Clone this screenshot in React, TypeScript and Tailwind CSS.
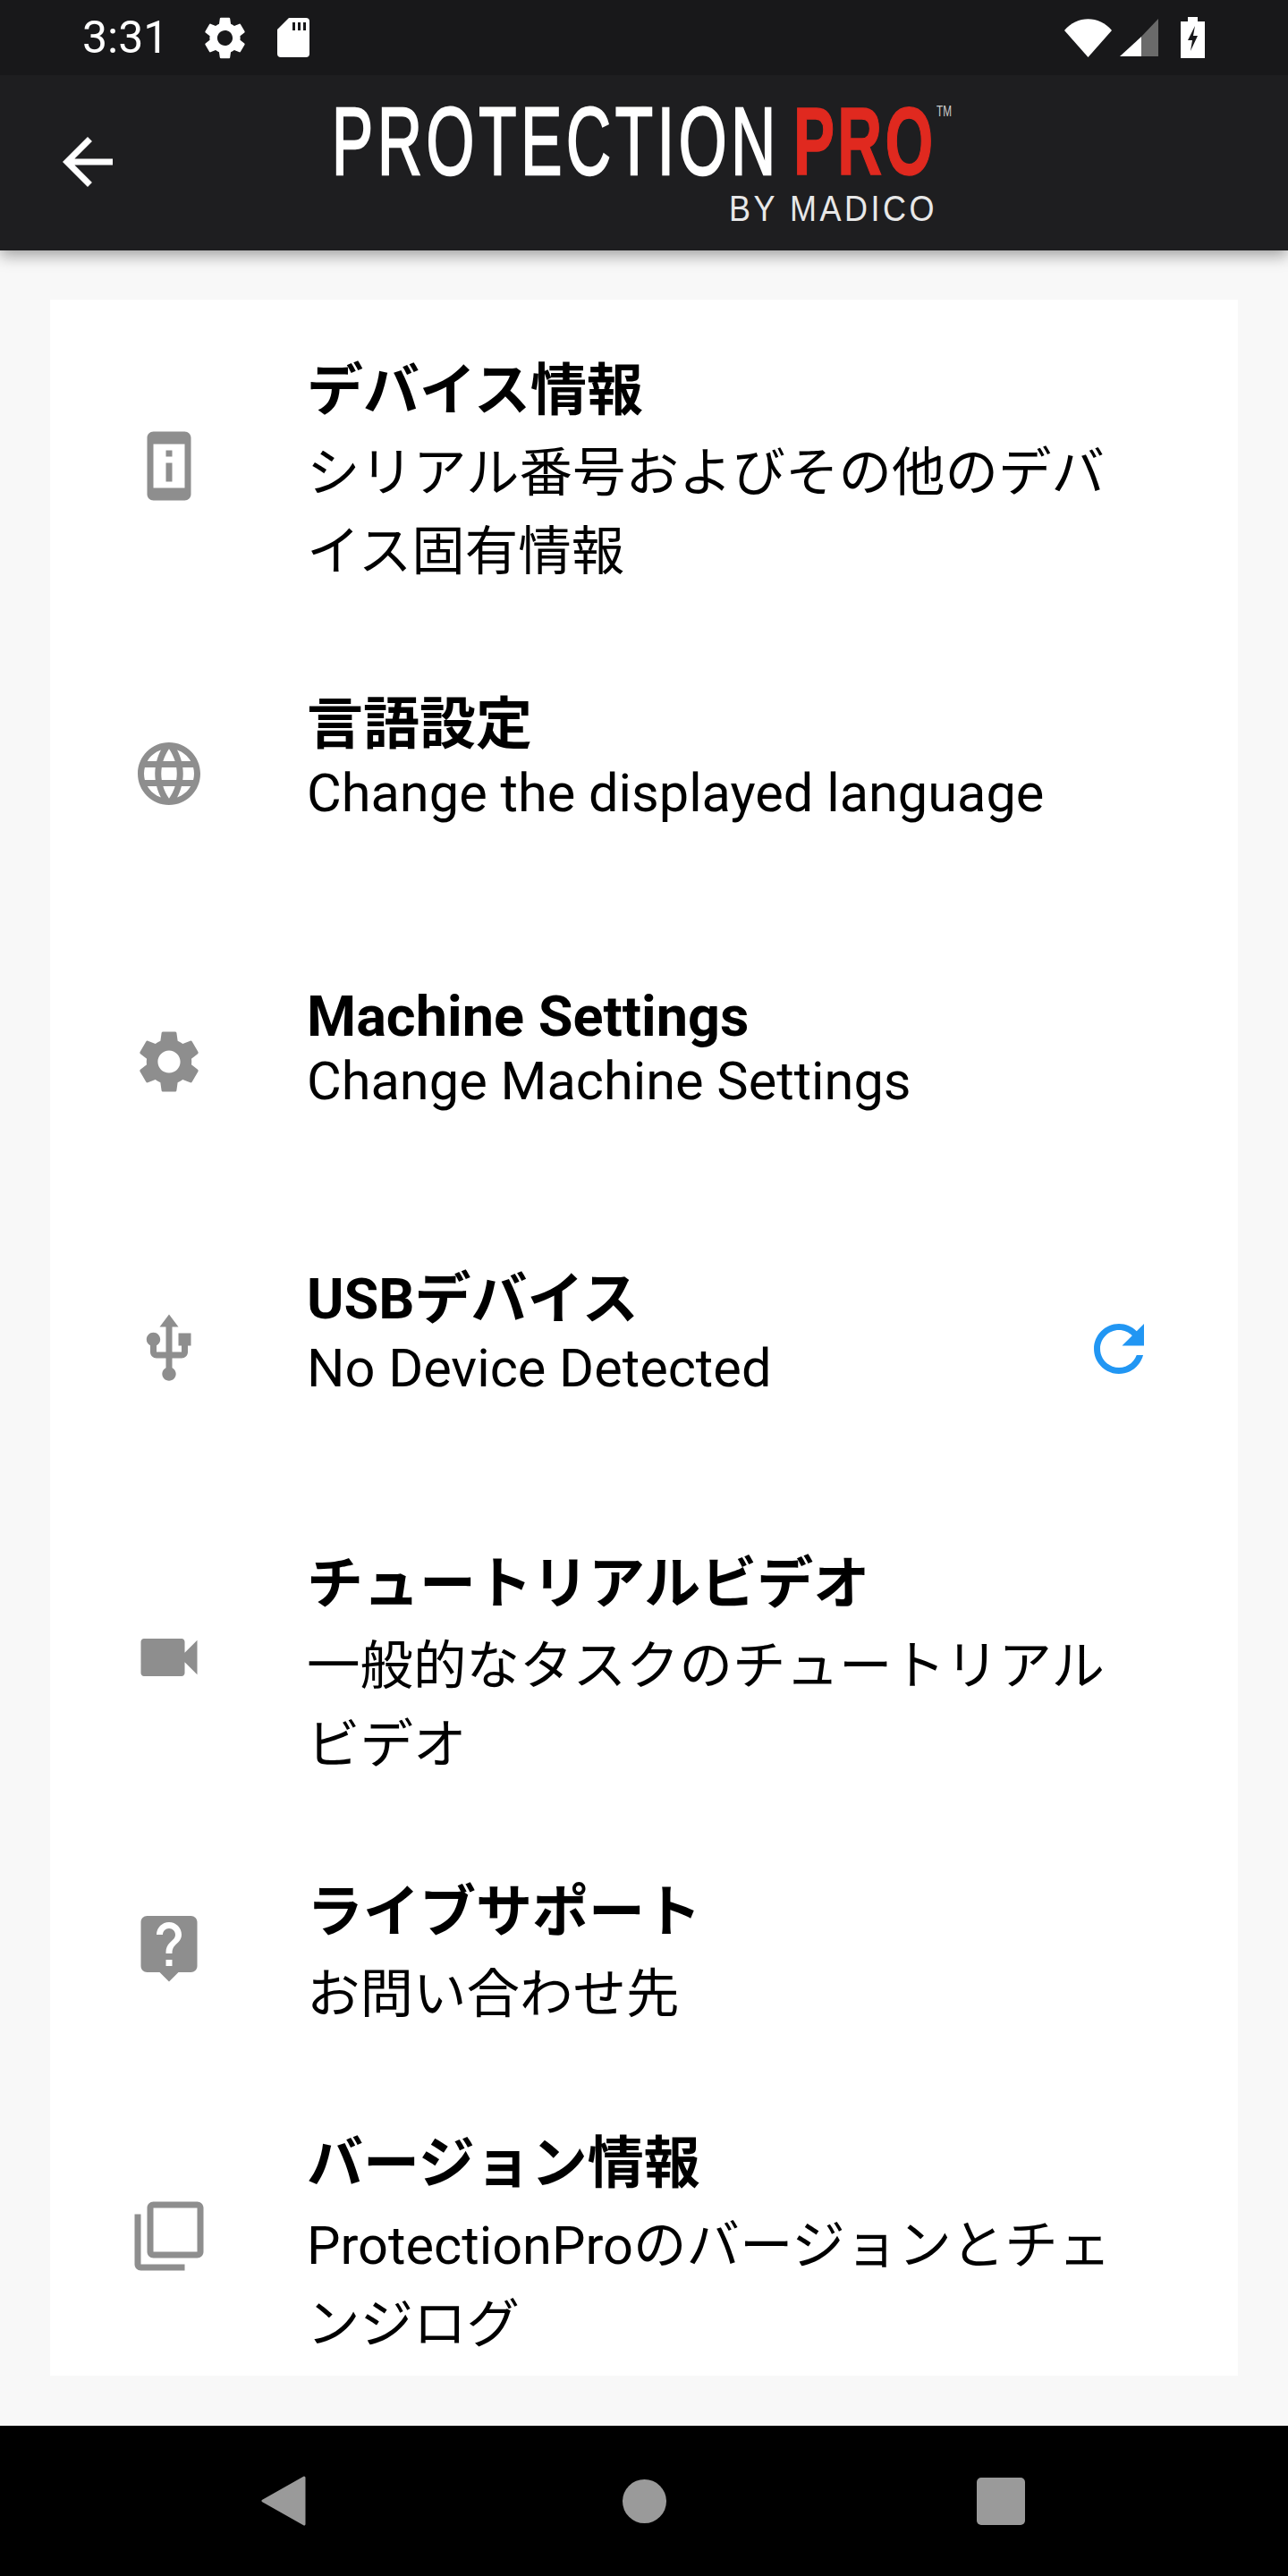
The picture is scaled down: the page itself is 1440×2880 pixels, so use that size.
import type { ReactNode } from "react";

const PATHS = {
  device:
    "M13 7h-2v2h2V7zm0 4h-2v6h2v-6zm4-9.99L7 1c-1.1 0-2 .9-2 2v18c0 1.1.9 2 2 2h10c1.1 0 2-.9 2-2V3c0-1.1-.9-1.99-2-1.99zM17 19H7V5h10v14z",
  globe:
    "M11.99 2C6.47 2 2 6.48 2 12s4.47 10 9.99 10C17.52 22 22 17.52 22 12S17.52 2 11.99 2zm6.93 6h-2.95c-.32-1.25-.78-2.45-1.38-3.56 1.84.63 3.37 1.91 4.33 3.56zM12 4.04c.83 1.2 1.48 2.53 1.91 3.96h-3.82c.43-1.43 1.08-2.76 1.91-3.96zM4.26 14C4.1 13.36 4 12.69 4 12s.1-1.36.26-2h3.38c-.08.66-.14 1.32-.14 2 0 .68.06 1.34.14 2H4.26zm.82 2h2.95c.32 1.25.78 2.45 1.38 3.56-1.84-.63-3.37-1.9-4.33-3.56zm2.95-8H5.08c.96-1.66 2.49-2.93 4.33-3.56C8.81 5.55 8.35 6.75 8.03 8zM12 19.96c-.83-1.2-1.48-2.53-1.91-3.96h3.82c-.43 1.43-1.08 2.76-1.91 3.96zM14.34 14H9.66c-.09-.66-.16-1.32-.16-2 0-.68.07-1.35.16-2h4.68c.09.65.16 1.32.16 2 0 .68-.07 1.34-.16 2zm.25 5.56c.6-1.11 1.06-2.31 1.38-3.56h2.95c-.96 1.65-2.49 2.93-4.33 3.56zM16.36 14c.08-.66.14-1.32.14-2 0-.68-.06-1.34-.14-2h3.38c.16.64.26 1.31.26 2s-.1 1.36-.26 2h-3.38z",
  gear:
    "M19.14 12.94c.04-.3.06-.61.06-.94 0-.32-.02-.64-.07-.94l2.03-1.58c.18-.14.23-.41.12-.61l-1.92-3.32c-.12-.22-.37-.29-.59-.22l-2.39.96c-.5-.38-1.03-.7-1.62-.94l-.36-2.54c-.04-.24-.24-.41-.48-.41h-3.84c-.24 0-.43.17-.47.41l-.36 2.54c-.59.24-1.13.57-1.62.94l-2.39-.96c-.22-.08-.47 0-.59.22L2.74 8.87c-.12.21-.08.47.12.61l2.03 1.58c-.05.3-.09.63-.09.94s.02.64.07.94l-2.03 1.58c-.18.14-.23.41-.12.61l1.92 3.32c.12.22.37.29.59.22l2.39-.96c.5.38 1.03.7 1.62.94l.36 2.54c.05.24.24.41.48.41h3.84c.24 0 .44-.17.47-.41l.36-2.54c.59-.24 1.13-.56 1.62-.94l2.39.96c.22.08.47 0 .59-.22l1.92-3.32c.12-.22.07-.47-.12-.61l-2.01-1.58zM12 15.6c-1.98 0-3.6-1.62-3.6-3.6s1.62-3.6 3.6-3.6 3.6 1.62 3.6 3.6-1.62 3.6-3.6 3.6z",
  usb:
    "M15 7v4h1v2h-3V5h2l-3-4-3 4h2v8H8v-2.07c.7-.37 1.2-1.08 1.2-1.93 0-1.21-.99-2.2-2.2-2.2-1.21 0-2.2.99-2.2 2.2 0 .85.5 1.56 1.2 1.93V13c0 1.11.89 2 2 2h3v3.05c-.71.37-1.2 1.1-1.2 1.95 0 1.22.99 2.2 2.2 2.2 1.21 0 2.2-.98 2.2-2.2 0-.85-.49-1.58-1.2-1.95V15h3c1.11 0 2-.89 2-2v-2h1V7h-4z",
  video:
    "M17 10.5V7c0-.55-.45-1-1-1H4c-.55 0-1 .45-1 1v10c0 .55.45 1 1 1h12c.55 0 1-.45 1-1v-3.5l4 4v-11l-4 4z",
  help:
    "M19 2H5c-1.11 0-2 .9-2 2v14c0 1.1.89 2 2 2h4l3 3 3-3h4c1.1 0 2-.9 2-2V4c0-1.1-.9-2-2-2zm-6 16h-2v-2h2v2zm2.07-7.75l-.9.92C13.45 11.9 13 12.5 13 14h-2v-.5c0-1.1.45-2.1 1.17-2.83l1.24-1.26c.37-.36.59-.86.59-1.41 0-1.1-.9-2-2-2s-2 .9-2 2H8c0-2.21 1.79-4 4-4s4 1.79 4 4c0 .88-.36 1.68-.93 2.25z",
  copies:
    "M3 5H1v16c0 1.1.9 2 2 2h14v-2H3V5zm18-4H7c-1.1 0-2 .9-2 2v14c0 1.1.9 2 2 2h14c1.1 0 2-.9 2-2V3c0-1.1-.9-2-2-2zm0 16H7V3h14v14z",
  refresh:
    "M17.65 6.35C16.2 4.9 14.21 4 12 4c-4.42 0-7.99 3.58-7.99 8s3.57 8 7.99 8c3.73 0 6.84-2.55 7.73-6h-2.08c-.82 2.33-3.04 4-5.65 4-3.31 0-6-2.69-6-6s2.69-6 6-6c1.66 0 3.14.69 4.22 1.78L13 11h7V4l-2.35 2.35z",
  back: "M20 11H7.83l5.59-5.59L12 4l-8 8 8 8 1.41-1.41L7.83 13H20v-2z",
};

const Icon = ({ d, className }: { d: string; className?: string }) => (
  <svg viewBox="0 0 24 24" fill="currentColor" className={className}>
    <path d={d} />
  </svg>
);

interface Row {
  icon: string;
  title: string;
  titleClass: string;
  lines: string;
  linesClass: string;
  rowClass: string;
  iconClass: string;
  action?: ReactNode;
}

const JP_TITLE = "leading-[96px] text-[63px]";
const JP_SUB = "leading-[88px] text-[59.5px]";
const EN_SUB = "mt-[-2px] leading-[62px] text-[59.5px]";

const rows: Row[] = [
  {
    icon: PATHS.device,
    title: "デバイス情報",
    titleClass: JP_TITLE,
    lines: "シリアル番号およびその他のデバイス固有情報",
    linesClass: JP_SUB,
    rowClass: "mt-[52px]",
    iconClass: "mt-[92px]",
  },
  {
    icon: PATHS.globe,
    title: "言語設定",
    titleClass: JP_TITLE,
    lines: "Change the displayed language",
    linesClass: EN_SUB,
    rowClass: "mt-[99px]",
    iconClass: "mt-[63px]",
  },
  {
    icon: PATHS.gear,
    title: "Machine Settings",
    titleClass: "leading-[86px] text-[63px]",
    lines: "Change Machine Settings",
    linesClass: EN_SUB,
    rowClass: "mt-[174px]",
    iconClass: "mt-[53px]",
  },
  {
    icon: PATHS.usb,
    title: "USBデバイス",
    titleClass: JP_TITLE,
    lines: "No Device Detected",
    linesClass: EN_SUB,
    rowClass: "mt-[163px]",
    iconClass: "mt-[63px]",
    action: <Icon d={PATHS.refresh} className="absolute left-[1062px] top-[63px] h-[84px] w-[84px] text-[#2196f3]" />,
  },
  {
    icon: PATHS.video,
    title: "チュートリアルビデオ",
    titleClass: JP_TITLE,
    lines: "一般的なタスクのチュートリアルビデオ",
    linesClass: JP_SUB,
    rowClass: "mt-[160px]",
    iconClass: "mt-[90px]",
  },
  {
    icon: PATHS.help,
    title: "ライブサポート",
    titleClass: JP_TITLE,
    lines: "お問い合わせ先",
    linesClass: JP_SUB,
    rowClass: "mt-[93px]",
    iconClass: "mt-[47px]",
  },
  {
    icon: PATHS.copies,
    title: "バージョン情報",
    titleClass: JP_TITLE,
    lines: "ProtectionProのバージョンとチェンジログ",
    linesClass: JP_SUB,
    rowClass: "mt-[95px]",
    iconClass: "mt-[89px]",
  },
];

const StatusBar = () => (
  <div className="flex h-[84px] items-center bg-[#18181a] pl-[92px] pr-[93px] text-white">
    <span className="w-[99px] text-[50px] leading-none">3:31</span>
    <Icon d={PATHS.gear} className="ml-[32px] h-[57px] w-[57px]" />
    <svg viewBox="0 0 36 44" className="ml-[30px] h-[44px] w-[36px]">
      <path d="M13 0h19a4 4 0 0 1 4 4v36a4 4 0 0 1-4 4H4a4 4 0 0 1-4-4V13z" fill="#fff" />
      <path d="M17 5h3v9h-3zM23 5h3v9h-3zM29 5h3v9h-3z" fill="#18181a" />
    </svg>
    <div className="ml-auto flex items-center">
      <svg viewBox="0 0 53 43" className="h-[43px] w-[53px]">
        <path d="M0 13C14-4 39-4 53 13L26.5 43z" fill="#fff" />
      </svg>
      <svg viewBox="0 0 43 42" className="ml-[9px] h-[42px] w-[43px]">
        <path d="M24 20L0 42h24z" fill="#fff" />
        <path d="M24 20L43 0v42H24z" fill="#6a6a6a" />
      </svg>
      <svg viewBox="0 0 27 46" className="ml-[25px] h-[46px] w-[27px]">
        <path d="M8 0h11v5h8v41H0V5h8z" fill="#fff" />
        <path d="M16 10L8 26h5l-2 12 8-17h-5z" fill="#18181a" />
      </svg>
    </div>
  </div>
);

const Logo = () => (
  <svg viewBox="0 0 700 150" className="ml-[230px] mt-[-14px] h-[150px] w-[700px]" style={{ fontFamily: "'Liberation Sans', sans-serif" }}>
    <text transform="translate(1 95) scale(.64 1)" fontSize="108" letterSpacing="7.5" fill="#fff" stroke="#fff" strokeWidth="2.5">
      PROTECTION
    </text>
    <text transform="translate(517 95) scale(.64 1)" fontSize="108" letterSpacing="5" fontWeight="700" fill="#e0291f" stroke="#e0291f" strokeWidth="1.5">
      PRO
    </text>
    <text x="677" y="30" fontSize="16" fill="#ccc" textLength="17" lengthAdjust="spacingAndGlyphs">
      TM
    </text>
    <text transform="translate(445 147) scale(.9 1)" fontSize="40" letterSpacing="3.9" fill="#e8e8e8">
      BY MADICO
    </text>
  </svg>
);

export default function App() {
  return (
    <div className="flex h-[2880px] flex-col bg-[#f8f8f8] font-['Roboto','Noto_Sans_CJK_JP',sans-serif] text-black">
      <div className="relative z-10 shadow-[0_6px_16px_rgba(0,0,0,0.35)]">
        <StatusBar />
        <div className="flex h-[196px] items-center bg-[#1e1e20] pl-14">
          <Icon d={PATHS.back} className="mt-[-2px] h-[84px] w-[84px] text-white" />
          <Logo />
        </div>
      </div>

      <main className="flex-1 px-14 pt-[55px]">
        <div className="flex h-[2321px] flex-col bg-white pl-[91px]">
          {rows.map((row) => (
            <div key={row.title} className={`relative flex items-start ${row.rowClass}`}>
              <Icon d={row.icon} className={`h-[84px] w-[84px] shrink-0 text-[#8e8e8e] ${row.iconClass}`} />
              <div className="ml-[112px] w-[900px] pt-[2px]">
                <div className={`font-bold ${row.titleClass}`}>{row.title}</div>
                <div className={row.linesClass}>{row.lines}</div>
              </div>
              {row.action}
            </div>
          ))}
        </div>
      </main>

      <nav className="flex h-[168px] items-center bg-black">
        <svg viewBox="0 0 50 56" className="ml-[292px] h-[56px] w-[50px]">
          <path d="M48 2L2 28l46 26z" fill="#9a9a9a" stroke="#9a9a9a" strokeWidth="3" strokeLinejoin="round" />
        </svg>
        <div className="ml-[354px] h-[49px] w-[49px] rounded-full bg-[#9a9a9a]" />
        <div className="ml-[347px] h-[53px] w-[54px] rounded-[5px] bg-[#9a9a9a]" />
      </nav>
    </div>
  );
}
